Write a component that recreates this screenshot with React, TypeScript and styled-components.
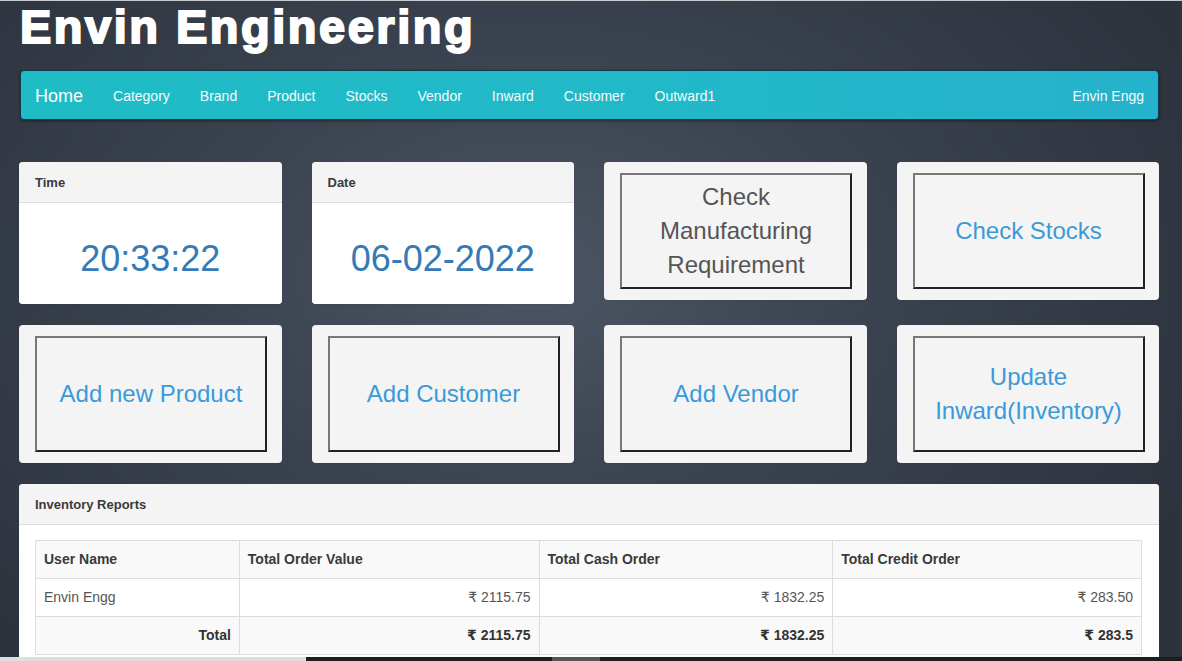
import React from "react";
import styled, { createGlobalStyle } from "styled-components";

const Global = createGlobalStyle`
  html, body { margin: 0; padding: 0; }
  body {
    font-family: "Liberation Sans", Arial, "DejaVu Sans", sans-serif;
    font-size: 14px;
    line-height: 1.42857;
    color: #333;
    min-height: 661px;
    overflow: hidden;
    background: radial-gradient(ellipse 62% 75% at 45% 42%, #4c5563 0%, #3b4350 45%, #2c333d 100%);
    border-top: 1px solid #c9cbce;
    box-sizing: border-box;
  }
  * { box-sizing: border-box; }
`;

const Page = styled.div`
  width: 1140px;
  margin-left: 19px;
  display: flex;
  flex-direction: column;
`;

const Title = styled.h1`
  margin: 0 0 18px 1px;
  font-size: 47px;
  line-height: 51px;
  font-weight: 900;
  color: #fff;
  letter-spacing: 2.5px;
  -webkit-text-stroke: 2px #fff;
`;

const Navbar = styled.nav`
  height: 50px;
  margin-left: 1px;
  width: 1139px;
  display: flex;
  align-items: center;
  padding: 3px 14px 0;
  border-radius: 4px;
  border: 1px solid #123b4d;
  background: linear-gradient(to right, #1fbcc5, #22b8c9 60%, #25b2cc);
  box-shadow: 0 1px 3px rgba(0, 0, 0, 0.45);
`;

const Brand = styled.span`
  font-size: 18px;
  color: #fff;
  margin-right: 15px;
`;

const NavLink = styled.span`
  font-size: 14px;
  color: #f4fbfc;
  padding: 0 15px;
`;

const NavRight = styled.span`
  margin-left: auto;
  font-size: 14px;
  color: #f4fbfc;
`;

const Grid = styled.div`
  margin-top: 42px;
  display: grid;
  grid-template-columns: repeat(4, 1fr);
  column-gap: 30px;
  align-items: start;
`;

const Panel = styled.div<{ $h?: number }>`
  background: #f4f4f4;
  border-radius: 4px;
  margin-bottom: 21px;
  box-shadow: 0 1px 1px rgba(0, 0, 0, 0.05);
  overflow: hidden;
  ${(p) => (p.$h ? `height: ${p.$h}px;` : "")}
`;

const PanelHeading = styled.div`
  padding: 12px 16px 8px;
  height: 41px;
  font-size: 13px;
  font-weight: bold;
  color: #3a3a3a;
  background: #f4f4f4;
  border-bottom: 1px solid #dcdcdc;
`;

const ValueBody = styled.div`
  background: #fff;
  height: 101px;
  display: flex;
  align-items: center;
  justify-content: center;
  padding-top: 10px;
  font-size: 36px;
  color: #337ab7;
`;

const ButtonPanel = styled(Panel)`
  padding: 11px 15px 0 16px;
`;

const ActionBox = styled.div<{ $muted?: boolean }>`
  width: 232px;
  height: 116px;
  display: flex;
  align-items: center;
  justify-content: center;
  text-align: center;
  font-size: 24px;
  line-height: 34px;
  padding: 0 8px;
  color: ${(p) => (p.$muted ? "#555" : "#3a9ad9")};
  background: #f4f4f4;
  border-style: solid;
  border-width: 2px;
  border-color: #777 #222 #222 #777;
`;

const ReportPanel = styled.div`
  background: #fff;
  border-radius: 4px 4px 0 0;
  width: 1140px;
  overflow: hidden;
`;

const ReportBody = styled.div`
  padding: 15px 15px 6px 16px;
`;

const Table = styled.table`
  width: 1107px;
  border-collapse: collapse;
  font-size: 14px;
  td { border: 1px solid #dddddd; padding: 8px; height: 38px; }
`;

const Row = styled.tr<{ $striped?: boolean }>`
  background: ${(p) => (p.$striped ? "#f9f9f9" : "#fff")};
`;

const HeadCell = styled.td`
  font-weight: bold;
  color: #3a3a3a;
`;

const Cell = styled.td<{ $num?: boolean; $bold?: boolean }>`
  text-align: ${(p) => (p.$num ? "right" : "left")};
  color: ${(p) => (p.$bold ? "#333" : "#555")};
  font-weight: ${(p) => (p.$bold ? "bold" : "normal")};
`;

const BottomStrip = styled.div`
  position: fixed;
  left: 0;
  right: 0;
  bottom: 0;
  height: 4px;
  display: flex;
`;

const StripPart = styled.div<{ $w?: number; $c: string }>`
  background: ${(p) => p.$c};
  ${(p) => (p.$w ? `width: ${p.$w}px;` : "flex: 1;")}
`;

const navItems = ["Category", "Brand", "Product", "Stocks", "Vendor", "Inward", "Customer", "Outward1"];

export default function App() {
  return (
    <>
      <Global />
      <Page>
        <Title>Envin Engineering</Title>
        <Navbar>
          <Brand>Home</Brand>
          {navItems.map((n) => (
            <NavLink key={n}>{n}</NavLink>
          ))}
          <NavRight>Envin Engg</NavRight>
        </Navbar>
        <Grid>
          <Panel>
            <PanelHeading>Time</PanelHeading>
            <ValueBody>20:33:22</ValueBody>
          </Panel>
          <Panel>
            <PanelHeading>Date</PanelHeading>
            <ValueBody>06-02-2022</ValueBody>
          </Panel>
          <ButtonPanel $h={138}>
            <ActionBox $muted>Check Manufacturing Requirement</ActionBox>
          </ButtonPanel>
          <ButtonPanel $h={138}>
            <ActionBox>Check Stocks</ActionBox>
          </ButtonPanel>
          <ButtonPanel $h={138}>
            <ActionBox>Add new Product</ActionBox>
          </ButtonPanel>
          <ButtonPanel $h={138}>
            <ActionBox>Add Customer</ActionBox>
          </ButtonPanel>
          <ButtonPanel $h={138}>
            <ActionBox>Add Vendor</ActionBox>
          </ButtonPanel>
          <ButtonPanel $h={138}>
            <ActionBox>Update Inward(Inventory)</ActionBox>
          </ButtonPanel>
        </Grid>
        <ReportPanel>
          <PanelHeading>Inventory Reports</PanelHeading>
          <ReportBody>
            <Table>
              <colgroup>
                <col style={{ width: 204 }} />
                <col style={{ width: 300 }} />
                <col style={{ width: 294 }} />
                <col style={{ width: 309 }} />
              </colgroup>
              <tbody>
                <Row $striped>
                  <HeadCell>User Name</HeadCell>
                  <HeadCell>Total Order Value</HeadCell>
                  <HeadCell>Total Cash Order</HeadCell>
                  <HeadCell>Total Credit Order</HeadCell>
                </Row>
                <Row>
                  <Cell>Envin Engg</Cell>
                  <Cell $num>₹ 2115.75</Cell>
                  <Cell $num>₹ 1832.25</Cell>
                  <Cell $num>₹ 283.50</Cell>
                </Row>
                <Row $striped>
                  <Cell $num $bold>Total</Cell>
                  <Cell $num $bold>₹ 2115.75</Cell>
                  <Cell $num $bold>₹ 1832.25</Cell>
                  <Cell $num $bold>₹ 283.5</Cell>
                </Row>
              </tbody>
            </Table>
          </ReportBody>
        </ReportPanel>
      </Page>
      <BottomStrip>
        <StripPart $w={306} $c="#dedede" />
        <StripPart $w={246} $c="#1e1e1e" />
        <StripPart $w={48} $c="#555" />
        <StripPart $c="#1e1e1e" />
      </BottomStrip>
    </>
  );
}
